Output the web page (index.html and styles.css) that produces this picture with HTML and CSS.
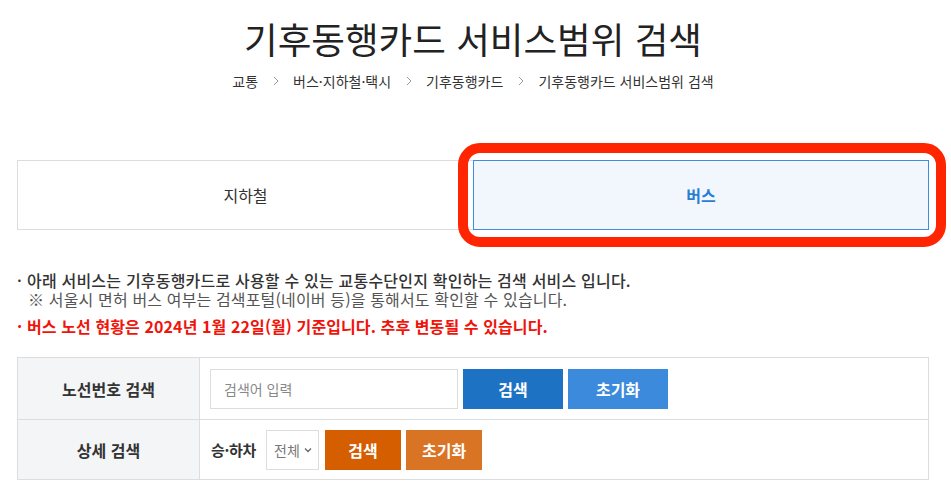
FILE: index.html
```html
<!DOCTYPE html>
<html lang="ko">
<head>
<meta charset="utf-8">
<title>기후동행카드 서비스범위 검색</title>
<link rel="stylesheet" href="styles.css">
</head>
<body>
<div class="page">
  <header class="head">
    <h1 class="title">기후동행카드 서비스범위 검색</h1>
    <nav class="crumbs">
      <span>교통</span>
      <svg class="chev" width="6" height="10" viewBox="0 0 6 10"><path d="M1 1l4 4-4 4" fill="none" stroke="#999" stroke-width="1"/></svg>
      <span>버스·지하철·택시</span>
      <svg class="chev" width="6" height="10" viewBox="0 0 6 10"><path d="M1 1l4 4-4 4" fill="none" stroke="#999" stroke-width="1"/></svg>
      <span>기후동행카드</span>
      <svg class="chev" width="6" height="10" viewBox="0 0 6 10"><path d="M1 1l4 4-4 4" fill="none" stroke="#999" stroke-width="1"/></svg>
      <span>기후동행카드 서비스범위 검색</span>
    </nav>
  </header>

  <div class="tabs">
    <div class="tab">지하철</div>
    <div class="tab active">버스</div>
  </div>

  <ul class="notes">
    <li class="note strong"><span class="dot">·</span>아래 서비스는 기후동행카드로 사용할 수 있는 교통수단인지 확인하는 검색 서비스 입니다.</li>
    <li class="note sub">※ 서울시 면허 버스 여부는 검색포털(네이버 등)을 통해서도 확인할 수 있습니다.</li>
    <li class="note red"><span class="dot">·</span>버스 노선 현황은 2024년 1월 22일(월) 기준입니다. 추후 변동될 수 있습니다.</li>
  </ul>

  <div class="search">
    <div class="row">
      <div class="th">노선번호 검색</div>
      <div class="td">
        <div class="input">검색어 입력</div>
        <button class="btn blue">검색</button>
        <button class="btn lightblue">초기화</button>
      </div>
    </div>
    <div class="row">
      <div class="th">상세 검색</div>
      <div class="td">
        <span class="label">승·하차</span>
        <div class="select">전체<svg width="8" height="6" viewBox="0 0 8 6"><path d="M1 1.5l3 3 3-3" fill="none" stroke="#666" stroke-width="1.3"/></svg></div>
        <button class="btn orange small">검색</button>
        <button class="btn lightorange small">초기화</button>
      </div>
    </div>
  </div>
</div>
<div class="highlight"></div>
</body>
</html>
```

FILE: styles.css
```css
* { box-sizing: border-box; }
html, body { margin: 0; padding: 0; background: #fff; }
body {
  font-family: "Noto Sans CJK KR", "Noto Sans", sans-serif;
  color: #333;
  width: 951px;
  height: 495px;
  overflow: hidden;
  position: relative;
}
.page {
  width: 912px;
  margin-left: 17px;
}
.head { text-align: center; padding-top: 18px; }
.title {
  margin: 0;
  font-size: 36.6px;
  line-height: 42px;
  font-weight: 400;
  color: #222;
}
.crumbs {
  margin-top: 11px;
  font-size: 14px;
  line-height: 20px;
  color: #333;
  display: flex;
  justify-content: center;
  align-items: center;
}
.chev { margin: 0 14px 0 15px; }

.tabs {
  margin-top: 69px;
  display: grid;
  grid-template-columns: 456px 456px;
  height: 70px;
}
.tab {
  display: flex;
  align-items: center;
  justify-content: center;
  font-size: 16px;
  color: #333;
  border: 1px solid #ddd;
  border-right: none;
}
.tab.active {
  border: 1px solid #3b8ee0;
  background: #f2f7fe;
  color: #2a7dd4;
  font-weight: 700;
}

.notes {
  list-style: none;
  margin: 40px 0 0;
  padding: 0;
}
.note { font-size: 16px; line-height: 20px; }
.dot { display: inline-block; width: 10px; }
.note.strong { font-weight: 500; color: #333; letter-spacing: 0.2px; }
.note.sub { font-size: 16px; color: #555; padding-left: 11px; line-height: 19px; letter-spacing: 0.15px; }
.note.red { color: #f0140a; font-weight: 700; margin-top: 7px; letter-spacing: 0.1px; }

.search {
  margin-top: 21px;
  border: 1px solid #ddd;
}
.row {
  display: grid;
  grid-template-columns: 182px 1fr;
  height: 61px;
}
.row + .row { border-top: 1px solid #ddd; height: 60px; }
.th {
  background: #f4f5f7;
  border-right: 1px solid #ddd;
  display: flex;
  align-items: center;
  justify-content: center;
  font-size: 16px;
  font-weight: 700;
  color: #333;
}
.td {
  display: flex;
  align-items: center;
  padding-left: 10px;
  gap: 5px;
}
.input {
  width: 248px;
  height: 40px;
  border: 1px solid #ddd;
  padding-left: 13px;
  display: flex;
  align-items: center;
  font-size: 14px;
  color: #888;
}
.btn {
  height: 40px;
  width: 100px;
  border: 0;
  margin: 0;
  padding: 0;
  color: #fff;
  font-family: inherit;
  font-size: 16px;
  font-weight: 700;
}
.btn.small { width: 76px; }
.btn.blue { background: #1d72c3; }
.btn.lightblue { background: #3b8adb; }
.btn.orange { background: #d55e00; margin-left: 1px; }
.btn.lightorange { background: #da7425; }
.label { font-size: 15px; font-weight: 700; color: #333; margin-right: 5px; margin-left: 1px; letter-spacing: -0.3px; }
.select {
  width: 53px;
  height: 40px;
  border: 1px solid #ddd;
  display: flex;
  align-items: center;
  gap: 4px;
  padding-left: 7px;
  font-size: 14px;
  color: #777;
}

.highlight {
  position: absolute;
  left: 458px;
  top: 143px;
  width: 488px;
  height: 104px;
  border: 10px solid #ff2500;
  border-radius: 22px;
  pointer-events: none;
}
```
